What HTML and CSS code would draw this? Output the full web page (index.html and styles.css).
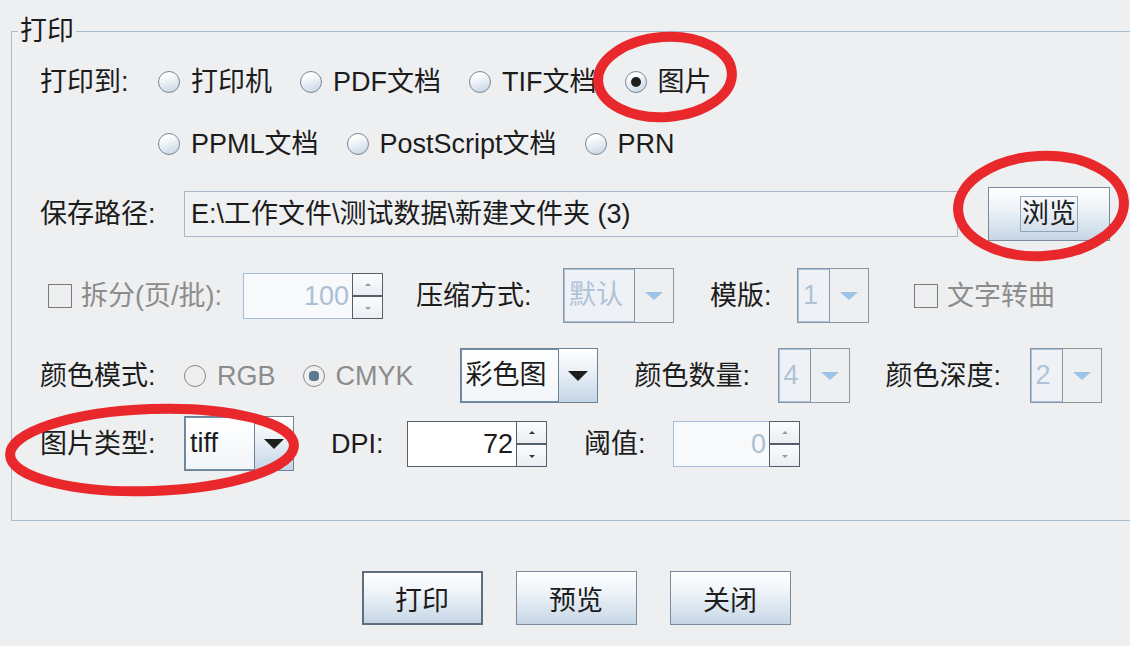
FILE: index.html
```html
<!DOCTYPE html>
<html lang="zh-CN">
<head>
    <meta charset="UTF-8">
    <meta name="viewport" content="width=device-width, initial-scale=1.0">
    <title>打印</title>
    <link rel="stylesheet" href="styles.css">
</head>
<body>
    <div class="dialog">
        <fieldset class="group">
            <legend>打印</legend>

            <div class="row row-target">
                <span class="label label-target">打印到:</span>
                <label class="radio"><span class="mark"></span>打印机</label>
                <label class="radio"><span class="mark"></span>PDF文档</label>
                <label class="radio"><span class="mark"></span>TIF文档</label>
                <label class="radio"><span class="mark checked"></span>图片</label>
            </div>

            <div class="row row-target2">
                <label class="radio"><span class="mark"></span>PPML文档</label>
                <label class="radio"><span class="mark"></span>PostScript文档</label>
                <label class="radio"><span class="mark"></span>PRN</label>
            </div>

            <div class="row row-path">
                <span class="label label-main">保存路径:</span>
                <div class="path-field">E:\工作文件\测试数据\新建文件夹 (3)</div>
                <button class="btn btn-browse"><span class="focus">浏览</span></button>
            </div>

            <div class="row row-split">
                <label class="check disabled check-split"><span class="box"></span>拆分(页/批):</label>
                <div class="spinner disabled spin-split">
                    <div class="spin-value">100</div>
                    <div class="spin-buttons"><span class="up"></span><span class="down"></span></div>
                </div>
                <span class="label label-compress">压缩方式:</span>
                <div class="combo disabled combo-compress">
                    <div class="combo-value">默认</div>
                    <div class="combo-arrow"><span class="tri"></span></div>
                </div>
                <span class="label label-tpl">模版:</span>
                <div class="combo disabled combo-small">
                    <div class="combo-value">1</div>
                    <div class="combo-arrow"><span class="tri"></span></div>
                </div>
                <label class="check disabled check-curve"><span class="box"></span>文字转曲</label>
            </div>

            <div class="row row-color">
                <span class="label label-main">颜色模式:</span>
                <label class="radio disabled"><span class="mark"></span>RGB</label>
                <label class="radio disabled"><span class="mark checked"></span>CMYK</label>
                <div class="combo combo-color">
                    <div class="combo-value">彩色图</div>
                    <div class="combo-arrow"><span class="tri"></span></div>
                </div>
                <span class="label label-count">颜色数量:</span>
                <div class="combo disabled combo-small">
                    <div class="combo-value">4</div>
                    <div class="combo-arrow"><span class="tri"></span></div>
                </div>
                <span class="label label-depth">颜色深度:</span>
                <div class="combo disabled combo-small">
                    <div class="combo-value">2</div>
                    <div class="combo-arrow"><span class="tri"></span></div>
                </div>
            </div>

            <div class="row row-image">
                <span class="label label-main">图片类型:</span>
                <div class="combo combo-type">
                    <div class="combo-value">tiff</div>
                    <div class="combo-arrow"><span class="tri"></span></div>
                </div>
                <span class="label label-dpi">DPI:</span>
                <div class="spinner spin-dpi">
                    <div class="spin-value">72</div>
                    <div class="spin-buttons"><span class="up"></span><span class="down"></span></div>
                </div>
                <span class="label label-threshold">阈值:</span>
                <div class="spinner disabled spin-threshold">
                    <div class="spin-value">0</div>
                    <div class="spin-buttons"><span class="up"></span><span class="down"></span></div>
                </div>
            </div>
        </fieldset>

        <div class="actions">
            <button class="btn btn-action btn-default">打印</button>
            <button class="btn btn-action">预览</button>
            <button class="btn btn-action">关闭</button>
        </div>
    </div>

    <!-- red hand-drawn marks over the screenshot -->
    <svg class="marks" width="1130" height="646" viewBox="0 0 1130 646">
        <ellipse cx="665" cy="77" rx="67" ry="40" transform="rotate(-4 665 77)"/>
        <ellipse cx="1041" cy="206" rx="83" ry="50" transform="rotate(-3 1041 206)"/>
        <ellipse cx="152" cy="450" rx="142" ry="41" transform="rotate(-2 152 450)"/>
    </svg>
</body>
</html>
```

FILE: styles.css
```css
body {
    margin: 0;
    width: 1130px;
    height: 646px;
    overflow: hidden;
    position: relative;
    background-color: #eeeff0;
    font-family: "Liberation Sans", "Noto Sans CJK SC", sans-serif;
    font-size: 27px;
    color: #1c1c1c;
}

.dialog {
    padding-top: 17px;
}

.group {
    margin: 0 0 0 11px;
    padding: 12px 0 49px 6px;
    width: 1140px;
    border: 1px solid #a9bccf;
    border-right: none;
}

.group legend {
    padding: 0 2px;
    line-height: 28px;
}

.row {
    display: flex;
    align-items: center;
    padding-left: 22px;
    white-space: nowrap;
}

.row-target { height: 50px; }
.row-target2 { height: 50px; margin-top: 12px; padding-left: 140px; }
.row-path { height: 54px; margin-top: 18px; }
.row-split { height: 55px; margin-top: 27px; }
.row-color { height: 55px; margin-top: 25px; }
.row-image { height: 55px; margin-top: 13px; }

.label {
    display: inline-block;
    line-height: 32px;
}

.label-target { width: 118px; }
.label-main { width: 144px; }
.label-compress { width: 147px; margin-left: 33px; }
.label-tpl { width: 87px; margin-left: 36px; }
.label-count { width: 143px; margin-left: 37px; }
.label-depth { width: 144px; margin-left: 36px; }
.label-dpi { width: 76px; margin-left: 37px; }
.label-threshold { width: 89px; margin-left: 37px; }

/* radio buttons */
.radio {
    display: flex;
    align-items: center;
    margin-right: 28px;
    line-height: 32px;
}

.radio .mark {
    position: relative;
    width: 20px;
    height: 20px;
    margin-right: 11px;
    border: 1px solid #7b8896;
    border-radius: 50%;
    background: linear-gradient(160deg, #ffffff 20%, #c3d3e3 100%);
}

.radio .mark.checked::after {
    content: "";
    position: absolute;
    left: 5px;
    top: 5px;
    width: 10px;
    height: 10px;
    border-radius: 50%;
    background-color: #1e1e1e;
}

.radio.disabled {
    color: #8c8c8c;
    margin-right: 27px;
}

.radio.disabled .mark {
    border-color: #8a8a8a;
    background: #eeeff0;
}

.radio.disabled .mark.checked::after {
    border-radius: 4px;
    background-color: #5e7790;
}

.row-color .radio:first-of-type { margin-right: 27px; }
.row-color .radio:nth-of-type(2) { margin-right: 46px; }

/* checkboxes */
.check {
    display: flex;
    align-items: center;
    line-height: 32px;
}

.check .box {
    width: 22px;
    height: 22px;
    margin-right: 9px;
    border: 1px solid #7a7a7a;
}

.check.disabled {
    color: #8c8c8c;
}

.check-split {
    width: 195px;
    margin-left: 8px;
}

.check-curve {
    margin-left: 45px;
}

/* save path */
.path-field {
    width: 766px;
    height: 44px;
    padding-left: 6px;
    line-height: 44px;
    border: 1px solid #a7b7c7;
    background-color: #eff0f2;
}

/* buttons */
.btn {
    font: inherit;
    color: #1c1c1c;
    border: 1px solid #7b8a9a;
    background: linear-gradient(to bottom, #ffffff 0%, #eef3f8 40%, #c6d6e6 100%);
    padding: 0;
    cursor: pointer;
}

.btn-browse {
    width: 122px;
    height: 54px;
    margin-left: 30px;
}

.btn-browse .focus {
    display: inline-block;
    padding: 0 1px;
    line-height: 34px;
    border: 1px solid #8fa6bf;
}

.actions {
    display: flex;
    justify-content: center;
    gap: 33px;
    padding-left: 22px;
    margin-top: 50px;
}

.btn-action {
    width: 121px;
    height: 54px;
}

.btn-default {
    border: 2px solid #5e6e7e;
}

/* combo boxes */
.combo {
    display: flex;
    height: 53px;
    border: 1px solid #6f8193;
}

.combo-value {
    padding-left: 4px;
    line-height: 51px;
    border: 1px solid #6f8fb0;
    border-right-color: #6f8193;
    background: linear-gradient(to bottom, #ffffff 0%, #f1f5f9 100%);
}

.combo-arrow {
    width: 38px;
    display: flex;
    align-items: center;
    justify-content: center;
    background: linear-gradient(to bottom, #ffffff 0%, #e8eff6 45%, #c4d5e7 100%);
}

.combo-arrow .tri {
    width: 0;
    height: 0;
    border-left: 10px solid transparent;
    border-right: 10px solid transparent;
    border-top: 10px solid #1e1e1e;
}

.combo.disabled {
    border-color: #8b96a1;
}

.combo.disabled .combo-value {
    color: #afc2d6;
    border-color: #a5c1de;
    border-right-color: #8b96a1;
    background: #eef2f6;
}

.combo.disabled .combo-arrow {
    background: #eeeff0;
}

.combo.disabled .combo-arrow .tri {
    border-left-width: 9px;
    border-right-width: 9px;
    border-top: 8px solid #9cc3e8;
}

.combo-compress .combo-value { width: 65px; }
.combo-small .combo-value { width: 26px; }
.combo-color .combo-value { width: 92px; }
.combo-type .combo-value { width: 64px; }

/* spinners */
.spinner {
    display: flex;
    height: 46px;
}

.spin-value {
    line-height: 44px;
    padding-right: 3px;
    text-align: right;
    background-color: #ffffff;
    border: 1px solid #555f69;
    border-right: none;
}

.spin-buttons {
    width: 29px;
    display: flex;
    flex-direction: column;
    border: 1px solid #555f69;
}

.spin-buttons span {
    flex: 1;
    position: relative;
    background: linear-gradient(to bottom, #fbfcfd, #eaeef2);
}

.spin-buttons .up {
    border-bottom: 2px solid #555f69;
}

.spin-buttons span::after {
    content: "";
    position: absolute;
    left: 12px;
    top: 9px;
    border-left: 3px solid transparent;
    border-right: 3px solid transparent;
}

.spin-buttons .up::after { border-bottom: 3px solid #333; }
.spin-buttons .down::after { border-top: 3px solid #333; top: 10px; }

.spinner.disabled .spin-value {
    color: #acc0d4;
    background-color: #f7f9fb;
    border-color: #a5bed7;
}

.spinner.disabled .spin-buttons .up::after { border-bottom-color: #999; }
.spinner.disabled .spin-buttons .down::after { border-top-color: #999; }

.spin-split .spin-value { width: 105px; }
.spin-dpi .spin-value { width: 105px; }
.spin-threshold .spin-value { width: 92px; }

/* annotations */
.marks {
    position: absolute;
    left: 0;
    top: 0;
    pointer-events: none;
}

.marks ellipse {
    fill: none;
    stroke: #e8282b;
    stroke-width: 10;
}
```
